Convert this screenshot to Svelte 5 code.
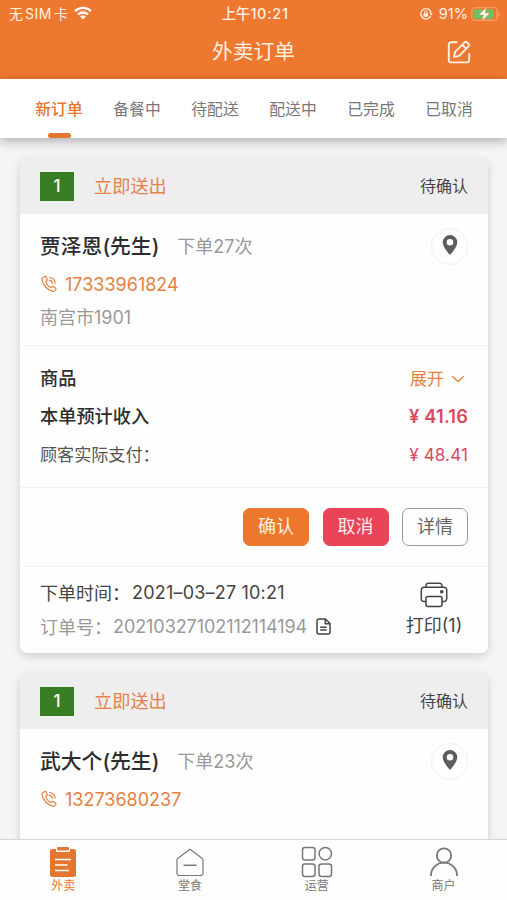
<script lang="ts">
  interface Order {
    no: number;
    name: string;
    times: number;
    phone: string;
    address: string;
    income: string;
    paid: string;
    createdAt: string;
    orderNo: string;
    printed: number;
  }

  const tabs = ['新订单', '备餐中', '待配送', '配送中', '已完成', '已取消'];
  let activeTab = $state(0);

  const navItems = [
    { key: 'takeout', label: '外卖' },
    { key: 'dinein', label: '堂食' },
    { key: 'manage', label: '运营' },
    { key: 'shop', label: '商户' }
  ];
  let activeNav = $state('takeout');

  const orders: Order[] = [
    {
      no: 1,
      name: '贾泽恩(先生)',
      times: 27,
      phone: '17333961824',
      address: '南宫市1901',
      income: '41.16',
      paid: '48.41',
      createdAt: '2021–03–27 10:21',
      orderNo: '20210327102112114194',
      printed: 1
    },
    {
      no: 1,
      name: '武大个(先生)',
      times: 23,
      phone: '13273680237',
      address: '',
      income: '',
      paid: '',
      createdAt: '',
      orderNo: '',
      printed: 0
    }
  ];
</script>

<div class="page">
  <header class="top">
    <div class="status">
      <div class="carrier">
        <span>无</span><span class="sim">SIM</span><span>卡</span>
        <svg width="18" height="14" viewBox="0 0 18 14" fill="none" stroke="currentColor" stroke-width="2.3">
          <path d="M1 5.2a11.5 11.5 0 0 1 16 0" />
          <path d="M4 8.5a7.2 7.2 0 0 1 10 0" />
          <path d="M9 13.6 6.2 10.7a4 4 0 0 1 5.6 0z" fill="currentColor" stroke="none" />
        </svg>
      </div>
      <span class="clock">上午<span>10:21</span></span>
      <div class="power">
        <svg width="14" height="14" viewBox="0 0 14 14" fill="none" stroke="currentColor" stroke-width="1.3">
          <path d="M11.8 8.7a5.2 5.2 0 1 1 .3-2.6" />
          <path d="M10.4 6.2h3.4l-1.7 2.3z" fill="currentColor" stroke="none" />
          <rect x="4.5" y="6.3" width="4.6" height="3.5" rx="0.6" fill="currentColor" stroke="none" />
          <path d="M5.5 6.4V5.3a1.3 1.3 0 0 1 2.6 0v1.1" stroke-width="1" />
        </svg>
        <span>91%</span>
        <svg width="30" height="16" viewBox="0 0 30 16">
          <rect x="0.9" y="1.8" width="25.2" height="12.6" rx="3.2" fill="none" stroke="#f8a56c" stroke-width="1.1" />
          <rect x="2.5" y="3.4" width="20" height="9.4" rx="1.8" fill="#69c466" />
          <path d="M27.4 5.9c2 .8 2 3.6 0 4.4z" fill="#f8a56c" />
          <path d="M15.6.9 7.7 9h4.7l-1.6 6.2L18.9 7h-4.7z" fill="#fff" stroke="#ee7830" stroke-width="0.5" />
        </svg>
      </div>
    </div>
    <div class="title-row">
      <h1>外卖订单</h1>
      <button class="edit" aria-label="edit">
        <svg width="24" height="24" viewBox="0 0 24 24" fill="none" stroke="currentColor" stroke-width="1.9">
          <path d="M10.5 2.3H4A2.2 2.2 0 0 0 1.8 4.5v15.7A2.2 2.2 0 0 0 4 22.4h16a2.2 2.2 0 0 0 2.2-2.2V13" />
          <path d="M7 17.2l1.1-5.4L17.6 2.3a1.6 1.6 0 0 1 2.3 0l1.7 1.7a1.6 1.6 0 0 1 0 2.3L12.2 15.9z" stroke-linejoin="round" />
          <path d="M15.3 4.8l3.9 3.9" />
        </svg>
      </button>
    </div>
  </header>

  <nav class="tabs">
    {#each tabs as tab, i}
      <button class="tab" class:active={activeTab === i} onclick={() => (activeTab = i)}>{tab}</button>
    {/each}
  </nav>

  <main class="list">
    {#each orders as order}
      <article class="card">
        <div class="card-head">
          <span class="badge">{order.no}</span>
          <span class="deliver">立即送出</span>
          <span class="state">待确认</span>
        </div>

        <section class="customer">
          <div class="info">
            <div class="name-row">
              <strong>{order.name}</strong>
              <span class="times">下单{order.times}次</span>
            </div>
            <div class="phone">
              <svg width="18" height="18" viewBox="0 0 18 18" fill="none" stroke="currentColor" stroke-width="1.2" stroke-linecap="round" stroke-linejoin="round">
                <path d="M3.3 2.2 5.1 1.5c.6-.2 1 .1 1.2.6l.9 2.4c.2.5 0 .9-.4 1.2l-1 .8c.5 2.5 2.6 4.9 5 6l1.1-.8c.4-.3.8-.3 1.2-.1l2.4 1.4c.5.3.6.8.3 1.3l-.9 1.3c-.5.6-1.2.9-2 .7C7.3 15.1 2.7 10 1.9 4.5c-.1-1 .5-1.9 1.4-2.3z" />
                <path d="M9.2 5.2c1.700.300 2.900 1.600 3.100 3.300M9.600 2.500c3.200.300 5.200 2.500 5.500 5.700" />
              </svg>
              <span>{order.phone}</span>
            </div>
            <div class="address">{order.address}</div>
          </div>
          <button class="locate" aria-label="location">
            <svg width="16" height="20" viewBox="0 0 16 20">
              <path d="M8 0a7.3 7.3 0 0 0-7.3 7.3C.7 12.3 8 20 8 20s7.3-7.7 7.3-12.7A7.3 7.3 0 0 0 8 0zm0 10.5a3.3 3.3 0 1 1 0-6.6 3.3 3.3 0 0 1 0 6.6z" fill="currentColor" />
            </svg>
          </button>
        </section>

        {#if order.orderNo}
          <section class="goods">
            <div class="row bold">
              <span>商品</span>
              <button class="expand">
                展开
                <svg width="14" height="8" viewBox="0 0 14 8" fill="none" stroke="currentColor" stroke-width="1.3">
                  <path d="M1.2 1.2 7 6.6l5.8-5.4" />
                </svg>
              </button>
            </div>
            <div class="row bold">
              <span>本单预计收入</span>
              <span class="money">¥ {order.income}</span>
            </div>
            <div class="row paid">
              <span>顾客实际支付：</span>
              <span class="money">¥ {order.paid}</span>
            </div>
          </section>

          <section class="actions">
            <button class="btn confirm">确认</button>
            <button class="btn cancel">取消</button>
            <button class="btn">详情</button>
          </section>

          <footer class="meta">
            <div class="meta-text">
              <div class="created">下单时间：<span>{order.createdAt}</span></div>
              <div class="order-no">
                订单号：<span>{order.orderNo}</span>
                <svg width="15" height="17" viewBox="0 0 15 17" fill="none" stroke="currentColor" stroke-width="1.5" stroke-linejoin="round">
                  <path d="M3 1h6.5L14 5.5V14a2 2 0 0 1-2 2H3a2 2 0 0 1-2-2V3a2 2 0 0 1 2-2z" />
                  <path d="M9.3 1.2v4.5h4.5M4.2 9.3h6.4M4.2 12h6.4" />
                </svg>
              </div>
            </div>
            <button class="print">
              <svg width="28" height="26" viewBox="0 0 28 26" fill="none" stroke="currentColor" stroke-width="1.5">
                <path d="M6 5.3V3.5A2.2 2.2 0 0 1 8.2 1.3h11.6A2.2 2.2 0 0 1 22 3.5v1.8" />
                <path d="M6 19.5H4a2.7 2.7 0 0 1-2.7-2.7V8A2.7 2.7 0 0 1 4 5.3h20A2.7 2.7 0 0 1 26.7 8v8.8a2.7 2.7 0 0 1-2.7 2.7h-2" />
                <rect x="6" y="14.5" width="16" height="10" rx="2" />
                <circle cx="21.7" cy="9.8" r="1.8" fill="currentColor" stroke="none" />
              </svg>
              <span>打印({order.printed})</span>
            </button>
          </footer>
        {/if}
      </article>
    {/each}
  </main>

  <nav class="bottom">
    {#each navItems as item}
      <button class="nav-item" class:active={activeNav === item.key} onclick={() => (activeNav = item.key)}>
        <svg width="32" height="32" viewBox="0 0 32 32" fill="none" stroke="currentColor" stroke-width="1.5">
          {#if item.key === 'takeout'}
            <path d="M5.5 3H9v1.5A1.5 1.5 0 0 0 10.5 6h11A1.5 1.5 0 0 0 23 4.5V3h3.5A2.5 2.5 0 0 1 29 5.5v23a2.5 2.5 0 0 1-2.5 2.5h-21A2.5 2.5 0 0 1 3 28.5v-23A2.5 2.5 0 0 1 5.5 3z" fill="currentColor" stroke="none" />
            <rect x="10" y="1" width="12" height="3.5" rx="1" fill="currentColor" stroke="none" />
            <path d="M8 13.5h16M8 19h12.5M8 24.5h14" stroke="#fff" stroke-width="1.7" />
          {:else if item.key === 'dinein'}
            <path d="M16 3.3 28 12.3a2 2 0 0 1 1 1.7v13.2a2.3 2.3 0 0 1-2.3 2.3H5.3A2.3 2.3 0 0 1 3 27.2V14a2 2 0 0 1 1-1.7z" stroke-width="1.2" />
            <path d="M9.5 19.3h13" />
          {:else if item.key === 'manage'}
            <rect x="1.5" y="1.5" width="12.5" height="12.5" rx="2.5" />
            <circle cx="24.3" cy="7.7" r="6.2" />
            <rect x="1.5" y="18" width="12.5" height="12.5" rx="2.5" />
            <rect x="18" y="18" width="12.5" height="12.5" rx="2.5" />
          {:else}
            <circle cx="16" cy="9.5" r="7.2" stroke-width="1.8" />
            <path d="M3 30v-1a13 12.3 0 0 1 26 0v1" stroke-width="1.8" />
          {/if}
        </svg>
        <span>{item.label}</span>
      </button>
    {/each}
  </nav>
</div>

<style>
  :global(body) {
    background: #f5f5f5;
  }

  .page {
    display: flex;
    flex-direction: column;
    width: 507px;
    height: 900px;
    overflow: hidden;
    background: #f5f5f5;
    color: #333;
    font-family: Inter, 'Noto Sans CJK SC', sans-serif;
    font-size: 18px;
  }

  button {
    padding: 0;
    border: 0;
    background: none;
    color: inherit;
    font: inherit;
  }

  svg {
    display: block;
    flex-shrink: 0;
  }

  .top {
    flex: none;
    height: 79px;
    background: #ee7830;
    color: #fff0e0;
  }

  .status {
    display: grid;
    grid-template-columns: 1fr auto 1fr;
    align-items: center;
    height: 28px;
    padding: 0 6px 0 9px;
    font-size: 14px;
    line-height: 28px;
  }

  .carrier,
  .power {
    display: flex;
    align-items: center;
  }

  .sim {
    margin: 0 2px;
    letter-spacing: 0.5px;
  }

  .carrier svg {
    margin-left: 6px;
    margin-bottom: 3px;
    color: #fff;
  }

  .clock {
    font-size: 14.5px;
    font-weight: 500;
  }

  .clock span {
    letter-spacing: 0.7px;
  }

  .power {
    justify-content: flex-end;
  }

  .power span {
    margin: 0 3px 0 6px;
    font-size: 14.5px;
  }

  .title-row {
    display: grid;
    grid-template-columns: 1fr auto 1fr;
    align-items: center;
    height: 48px;
    padding: 0 36px;
  }

  h1 {
    grid-column: 2;
    margin: 0;
    font-size: 20.8px;
    font-weight: 400;
    line-height: 48px;
  }

  .edit {
    justify-self: end;
  }

  .tabs {
    z-index: 1;
    display: grid;
    flex: none;
    grid-template-columns: repeat(6, 78px);
    height: 59px;
    padding: 0 19px 0 20px;
    background: #fff;
    box-shadow: 0 3px 10px rgba(0, 0, 0, 0.3);
  }

  .tab {
    display: flex;
    flex-direction: column;
    align-items: center;
    justify-content: space-between;
    height: 59px;
    color: #777;
    font-size: 15.8px;
    line-height: 62px;
  }

  .tab.active {
    color: #e5762f;
    font-weight: 500;
  }

  .tab.active::after {
    content: '';
    width: 23px;
    height: 5px;
    margin-top: -8px;
    border-radius: 2.5px;
    background: #e5762f;
  }

  .list {
    display: flex;
    flex: 1;
    flex-direction: column;
    gap: 20px;
    min-height: 0;
    padding: 20px 19px 0 20px;
    overflow: hidden;
  }

  .card {
    flex: none;
    border-radius: 7px;
    background: #fefefe;
    box-shadow: 0 3px 10px rgba(0, 0, 0, 0.16);
  }

  .card-head {
    display: flex;
    align-items: center;
    height: 56px;
    padding: 0 20px;
    border-radius: 7px 7px 0 0;
    background: #eee;
    line-height: 26px;
  }

  .badge {
    width: 34px;
    height: 29px;
    background: #397d22;
    color: #fff;
    font-size: 17px;
    font-weight: 500;
    line-height: 29px;
    text-align: center;
  }

  .deliver {
    margin-left: 20px;
    color: #e5824c;
    font-size: 18.2px;
  }

  .state {
    margin-left: auto;
    padding-bottom: 1px;
    color: #444;
    font-size: 16px;
  }

  .customer {
    display: flex;
    justify-content: space-between;
    height: 117px;
    padding: 14px 20px 0;
  }

  .name-row {
    display: flex;
    align-items: center;
    height: 38px;
    line-height: 38px;
  }

  strong {
    color: #2d2d2d;
    font-size: 20.8px;
    font-weight: 500;
  }

  .times {
    margin-left: 18px;
    color: #999;
  }

  .phone {
    display: flex;
    align-items: center;
    height: 36px;
    gap: 7px;
    color: #e5803e;
  }

  .address {
    height: 30px;
    color: #999;
    line-height: 31px;
  }

  .locate {
    display: flex;
    align-items: center;
    justify-content: center;
    box-sizing: border-box;
    width: 37px;
    height: 37px;
    padding-bottom: 4px;
    border: 1px solid #eee;
    border-radius: 50%;
    color: #5c5c5c;
  }

  .goods {
    height: 127px;
    padding: 14px 20px 0;
    border-top: 1px solid #f2f2f2;
  }

  .row {
    display: flex;
    align-items: center;
    justify-content: space-between;
    height: 38px;
    line-height: 36px;
  }

  .row.bold {
    color: #2d2d2d;
    font-size: 18.2px;
    font-weight: 500;
  }

  .row.bold > span {
    padding-bottom: 2px;
  }

  .row.paid {
    color: #555;
    font-size: 17.1px;
  }

  .money {
    color: #da4a60;
    letter-spacing: 0.1px;
  }

  .bold .money {
    font-weight: 600;
    letter-spacing: 0.2px;
  }

  .expand {
    display: flex;
    align-items: center;
    gap: 7px;
    margin-right: 3px;
    color: #e5823e;
    font-size: 17px;
    font-weight: 400;
  }

  .actions {
    display: flex;
    justify-content: flex-end;
    gap: 13.5px;
    height: 58px;
    padding: 20px 20px 0;
    border-top: 1px solid #f2f2f2;
  }

  .btn {
    box-sizing: border-box;
    width: 66px;
    height: 38px;
    border: 1px solid #999;
    border-radius: 7px;
    color: #666;
    font-size: 18px;
    line-height: 34px;
  }

  .btn.confirm {
    border-color: #ed772c;
    background: #ed772c;
    color: #fff0e0;
  }

  .btn.cancel {
    border-color: #e94357;
    background: #e94357;
    color: #ffe8ea;
  }

  .meta {
    display: flex;
    justify-content: space-between;
    height: 78px;
    padding: 8px 20px 0;
    border-top: 1px solid #f2f2f2;
  }

  .created,
  .order-no {
    display: flex;
    align-items: center;
    height: 34px;
    color: #444;
    font-size: 18px;
  }

  .created span {
    margin-left: 2px;
    letter-spacing: 0.2px;
  }

  .order-no {
    color: #999;
  }

  .order-no span {
    margin-left: 1px;
    letter-spacing: -0.07px;
  }

  .order-no svg {
    margin-left: 9px;
    color: #444;
  }

  .print {
    display: flex;
    flex-direction: column;
    align-items: center;
    align-self: flex-start;
    width: 68px;
    padding-top: 7px;
    color: #444;
    line-height: 35px;
  }

  .bottom {
    display: grid;
    flex: none;
    grid-template-columns: repeat(4, 1fr);
    box-sizing: border-box;
    height: 61px;
    border-top: 1px solid #d6d6d6;
    background: #fefefe;
  }

  .nav-item {
    display: flex;
    flex-direction: column;
    align-items: center;
    padding-top: 6px;
    color: #777;
    font-size: 12px;
    line-height: 16px;
  }

  .nav-item.active {
    color: #e5762f;
  }
</style>
